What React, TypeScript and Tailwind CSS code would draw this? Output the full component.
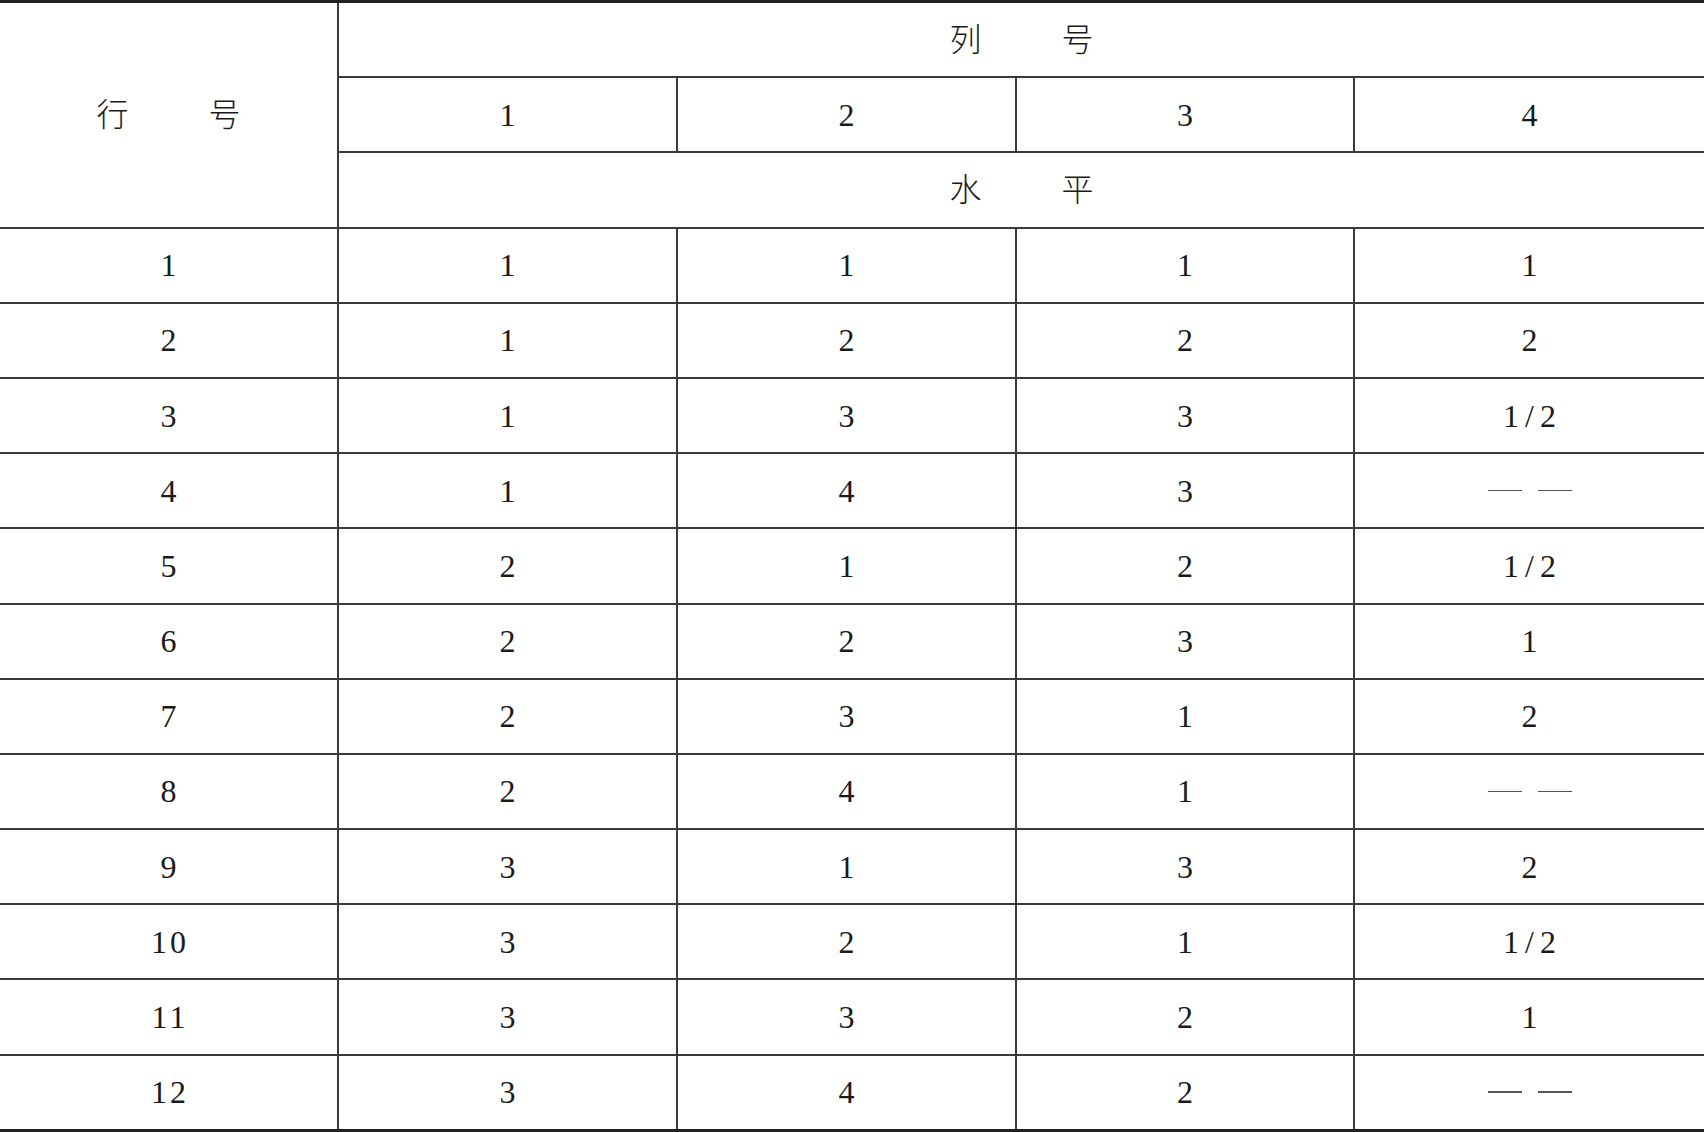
const rows: string[][] = [
  ["1", "1", "1", "1", "1"],
  ["2", "1", "2", "2", "2"],
  ["3", "1", "3", "3", "1/2"],
  ["4", "1", "4", "3", "—"],
  ["5", "2", "1", "2", "1/2"],
  ["6", "2", "2", "3", "1"],
  ["7", "2", "3", "1", "2"],
  ["8", "2", "4", "1", "—"],
  ["9", "3", "1", "3", "2"],
  ["10", "3", "2", "1", "1/2"],
  ["11", "3", "3", "2", "1"],
  ["12", "3", "4", "2", "—"],
];

const cell = "bg-white flex items-center justify-center";

function Spaced({ a, b }: { a: string; b: string }) {
  return (
    <span className="flex gap-[80px] font-light">
      <span>{a}</span>
      <span>{b}</span>
    </span>
  );
}

function Dashes() {
  return (
    <span className="flex gap-[16px]">
      <span className="block w-[34px] h-[1.5px] bg-[#555]" />
      <span className="block w-[34px] h-[1.5px] bg-[#555]" />
    </span>
  );
}

function Value({ v }: { v: string }) {
  if (v === "—") return <Dashes />;
  if (v === "1/2") return <span className="tracking-[6px] pl-[6px]">{v}</span>;
  if (v.length > 1) return <span className="tracking-[3px] pl-[3px]">{v}</span>;
  return <span>{v}</span>;
}

export default function App() {
  return (
    <div
      className="w-[1704px] h-[1132px] bg-white text-[32px] text-[#1a1a1a] leading-none"
      style={{ fontFamily: '"Liberation Serif", "Noto Sans CJK SC", serif' }}
    >
      <div className="grid grid-cols-[337px_337px_337px_336px_1fr] grid-rows-[repeat(15,73.2px)] gap-[2px] bg-[#3a3a3a] border-t-[3px] border-b-[3px] border-[#222]">
        <div className={`${cell} row-span-3`}>
          <Spaced a="行" b="号" />
        </div>
        <div className={`${cell} col-span-4`}>
          <Spaced a="列" b="号" />
        </div>
        <div className={cell}>1</div>
        <div className={cell}>2</div>
        <div className={cell}>3</div>
        <div className={cell}>4</div>
        <div className={`${cell} col-span-4`}>
          <Spaced a="水" b="平" />
        </div>

        {rows.map((r, i) =>
          r.map((v, j) => (
            <div key={`${i}-${j}`} className={cell}>
              <Value v={v} />
            </div>
          ))
        )}
      </div>
    </div>
  );
}
